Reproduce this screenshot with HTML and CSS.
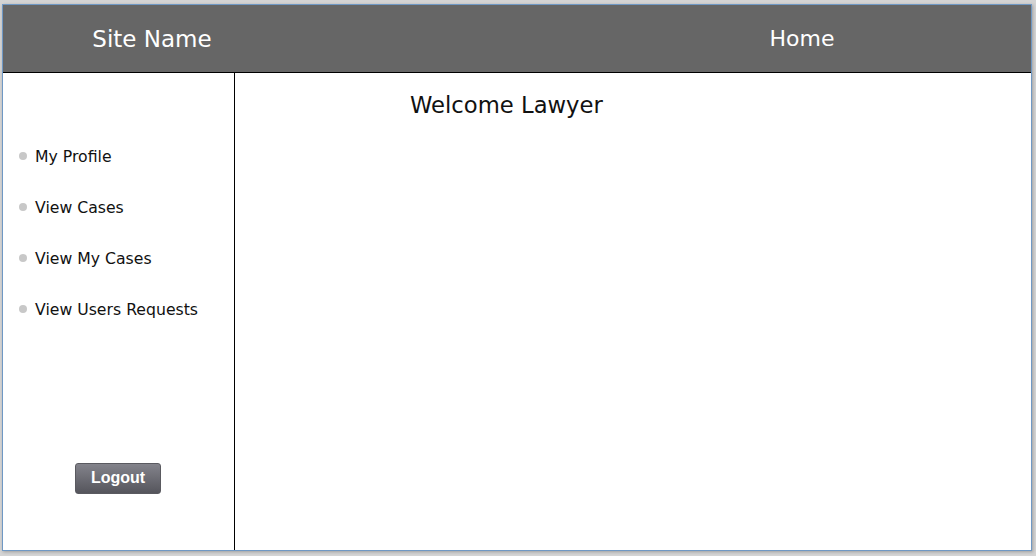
FILE: index.html
```html
<!DOCTYPE html>
<html>
<head>
<meta charset="utf-8">
<link rel="stylesheet" href="styles.css">
</head>
<body>
<div class="frame">
  <header class="topbar">
    <div class="site-name">Site Name</div>
    <div class="home">Home</div>
  </header>
  <div class="body">
    <aside class="sidebar">
      <ul class="menu">
        <li>My Profile</li>
        <li>View Cases</li>
        <li>View My Cases</li>
        <li>View Users Requests</li>
      </ul>
      <button class="logout">Logout</button>
    </aside>
    <main class="content">
      <h1 class="welcome">Welcome Lawyer</h1>
    </main>
  </div>
</div>
</body>
</html>
```

FILE: styles.css
```css
html, body {
  margin: 0;
  padding: 0;
}
body {
  background: #d4d4d4;
  width: 1036px;
  height: 556px;
  overflow: hidden;
  font-family: "DejaVu Sans", sans-serif;
}
.frame {
  margin: 4px 0 0 2px;
  width: 1028px;
  height: 545px;
  border: 1px solid #6f98c4;
  background: #fff;
  display: flex;
  flex-direction: column;
  box-shadow: 1px 1px 3px rgba(0,0,0,0.25);
}
.topbar {
  height: 67px;
  background: #666666;
  border-bottom: 1px solid #000;
  display: flex;
  align-items: center;
  color: #fff;
}
.site-name {
  width: 298px;
  text-align: center;
  font-size: 23px;
}
.home {
  margin-left: auto;
  width: 458px;
  text-align: center;
  font-size: 22px;
}
.body {
  flex: 1;
  display: flex;
}
.sidebar {
  width: 231px;
  border-right: 1px solid #000;
  display: flex;
  flex-direction: column;
}
.menu {
  list-style: none;
  margin: 0;
  padding: 74px 0 0 16px;
  display: flex;
  flex-direction: column;
  gap: 31px;
}
.menu li {
  height: 20px;
  line-height: 20px;
  font-size: 15.7px;
  color: #111;
  display: flex;
  align-items: center;
}
.menu li::before {
  content: "";
  flex: 0 0 8px;
  width: 8px;
  height: 8px;
  border-radius: 50%;
  background: #c8c8c8;
  margin-right: 8px;
  margin-bottom: 3px;
}
.logout {
  margin: auto 0 56px 72px;
  align-self: flex-start;
  width: 86px;
  height: 31px;
  border: 1px solid #5a5a60;
  border-radius: 3px;
  background: linear-gradient(#83838b, #55555c);
  color: #fff;
  font-family: "Liberation Sans", Arial, sans-serif;
  font-weight: bold;
  font-size: 16px;
  padding: 0 0 2px 0;
}
.content {
  flex: 1;
  padding: 18px 0 0 175px;
}
.welcome {
  margin: 0;
  font-weight: normal;
  font-size: 22.7px;
  line-height: 28px;
  color: #111;
}
```
